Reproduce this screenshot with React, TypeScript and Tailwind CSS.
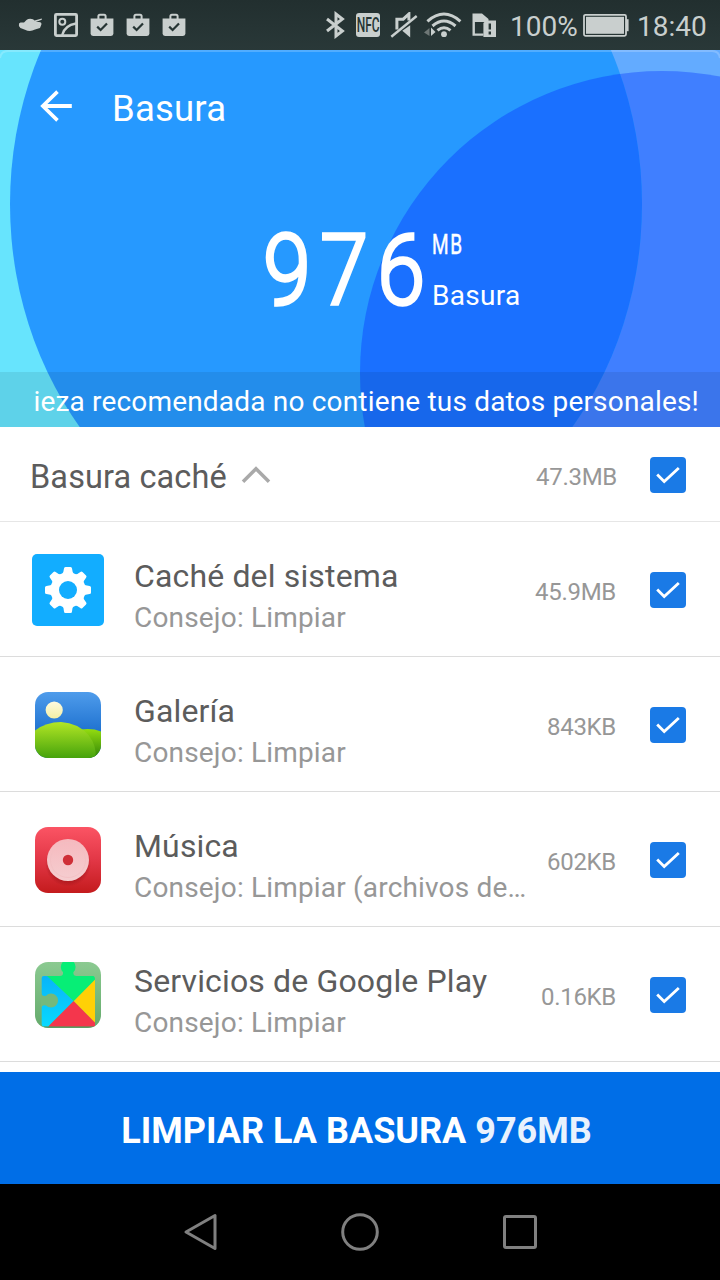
import type { ReactNode } from "react";

const ink = "#c9cfce";

function BagIcon() {
  return (
    <svg width="24" height="24" viewBox="0 0 24 24" className="shrink-0">
      <path d="M8.4 6V3.2Q8.4 1.7 9.9 1.7h4.2q1.5 0 1.5 1.5V6" fill="none" stroke={ink} strokeWidth="2" />
      <path d="M.6 5.4h22.8V20.6q0 2.4-2.4 2.4H3Q.6 23 .6 20.6z" fill={ink} />
      <path d="M7.2 13.6l3.4 3.4 6.4-6.6" fill="none" stroke="#263534" strokeWidth="2.2" />
    </svg>
  );
}

function StatusBar() {
  return (
    <div className="flex h-[50px] items-center bg-linear-to-b from-[#222f2f] to-[#293838] pl-[18px] text-[28px] leading-none text-[#c9cfce]">
      <div className="flex w-[306px] items-center gap-3">
        <svg width="24" height="24" viewBox="0 0 24 24" className="shrink-0">
          <path d="M1 10.5L2.5 9.5H6L8.5 7Q11 5 15 6.2L16.5 7.6L23.8 5.6V6.8L17.8 9H21Q23.9 9.4 23.4 11.4L22 15L17 16.6Q12 19.4 7 16.8L2.4 15Q.2 12.5 1 10.5z" fill={ink} />
        </svg>
        <svg width="24" height="24" viewBox="0 0 24 24" fill="none" stroke={ink} className="shrink-0">
          <rect x="1.4" y="1.4" width="21.2" height="21.2" rx="1" strokeWidth="2.8" />
          <circle cx="8.3" cy="8.7" r="3" strokeWidth="2" />
          <path d="M8.2 22Q10.5 12.5 22 10.5" strokeWidth="2.4" />
        </svg>
        <BagIcon />
        <BagIcon />
        <BagIcon />
      </div>
      <svg width="24" height="28" viewBox="0 0 24 28" className="shrink-0">
        <path d="M3 8L18.4 20L12 25V3L18.4 8L3 20" fill="none" stroke={ink} strokeWidth="3" />
      </svg>
      <div className="ml-2 flex h-6 w-6 shrink-0 items-center justify-center rounded-[3px] bg-[#c9cfce]">
        <span className="inline-block scale-x-[0.6] font-['Roboto',sans-serif] text-[20px] font-medium text-[#263534]">NFC</span>
      </div>
      <svg width="28" height="26" viewBox="0 0 28 26" className="ml-[10px] shrink-0">
        <path d="M1.3 24.7L26.7 4" fill="none" stroke={ink} strokeWidth="2.4" />
        <path d="M6.9 17.5V7.2H13.2L18.9 2V8.5" fill="none" stroke={ink} strokeWidth="3" />
        <path d="M20.2 13.2V25.6L12.3 18.8z" fill={ink} />
      </svg>
      <svg width="38" height="26" viewBox="0 0 38 26" className="ml-[6px] shrink-0">
        <g fill="none" stroke={ink} strokeWidth="3">
          <path d="M3.4 9.3Q20 -5.2 36.4 9.3" />
          <path d="M8.5 14Q20 4 31.5 14" />
          <path d="M13.5 18.4Q20 13 26.5 18.4" />
        </g>
        <circle cx="20" cy="22.2" r="2.9" fill={ink} />
        <path d="M0 20.5L5.5 16v8z" fill="#6e7776" />
        <path d="M7 15.5L11.5 20 7 24z" fill={ink} />
      </svg>
      <svg width="26" height="26" viewBox="0 0 26 26" className="ml-[9px] shrink-0">
        <path d="M1.5 1.4h9.5L17.5 7v3H3.9V21.4H12.5V23.8H1.5z" fill={ink} />
        <path d="M15 8.4h10V25H12.4V11z" fill={ink} />
        <path d="M18.8 11.4v6.2M18.8 19.6v2.8" stroke="#263534" strokeWidth="2.4" />
      </svg>
      <span className="ml-[13px] w-[70px] pt-[4px]">100%</span>
      <svg width="46" height="24" viewBox="0 0 46 24" className="ml-[3px] shrink-0">
        <rect x="1" y="1.8" width="42" height="21" rx="1.5" fill="none" stroke={ink} strokeWidth="1.8" />
        <rect x="3" y="3.8" width="38" height="17" fill={ink} />
        <path d="M43 6.2h2.6v12H43z" fill={ink} />
      </svg>
      <span className="ml-[8px] pt-[4px]">18:40</span>
    </div>
  );
}

function HeaderArt() {
  return (
    <svg width="720" height="377" viewBox="0 50 720 377" className="absolute inset-0">
      <defs>
        <clipPath id="disc">
          <ellipse cx="326" cy="204" rx="316" ry="356" />
        </clipPath>
      </defs>
      <rect y="50" width="360" height="377" fill="#67e4fd" />
      <rect x="360" y="50" width="360" height="377" fill="#63abff" />
      <circle cx="662" cy="373" r="302" fill="#407fff" />
      <ellipse cx="326" cy="204" rx="316" ry="356" fill="#2699ff" />
      <circle cx="662" cy="373" r="302" fill="#1a70ff" clipPath="url(#disc)" />
      <path d="M0 58Q1 51 8 51H712Q719 51 720 58" fill="none" stroke="#fff" strokeOpacity=".2" strokeWidth="2" />
    </svg>
  );
}

function Header() {
  return (
    <header className="relative h-[377px] overflow-hidden text-white">
      <HeaderArt />
      <div className="relative flex h-full flex-col">
        <div className="flex h-[116px] items-center pl-10">
          <svg width="32" height="32" viewBox="0 0 32 32" className="mb-[4px]" fill="none" stroke="#fff">
            <path d="M31.8 16H3" strokeWidth="4" />
            <path d="M17.5 1.6L2.8 16l14.7 14.4" strokeWidth="3.6" />
          </svg>
          <h1 className="ml-[40px] pt-[2px] text-[36.5px] leading-none tracking-[0.2px]">Basura</h1>
        </div>
        <div className="flex flex-1 pt-[61px] pl-[263px]">
          <div className="w-[169px]">
            <span className="mt-[2px] inline-block origin-left scale-x-[0.88] text-[98px] leading-[84px] font-light tracking-[10.6px] whitespace-nowrap [-webkit-text-stroke:3.5px_white] [stroke-linejoin:round]">
              97<span className="tracking-normal">6</span>
            </span>
          </div>
          <div className="flex flex-col">
            <span className="mt-[4px] inline-block origin-left scale-x-[0.68] text-[28px] leading-[28px] tracking-[2.5px] [-webkit-text-stroke:0.5px_white]">MB</span>
            <span className="mt-[23px] text-[28px] leading-[28px] tracking-[0.3px]">Basura</span>
          </div>
        </div>
        <div className="flex h-[55px] items-center justify-end bg-black/8 pt-[5px] pr-[21px] text-[28px] tracking-[0.18px] whitespace-nowrap">
          ieza recomendada no contiene tus datos personales!
        </div>
      </div>
    </header>
  );
}

function Check() {
  return (
    <span className="flex h-9 w-9 shrink-0 items-center justify-center rounded-[4px] bg-[#1a7ae6]">
      <svg width="24" height="18" viewBox="0 0 24 18" fill="none" stroke="#fff" strokeWidth="2.8">
        <path d="M1.2 8.6l7 7L22.8 2" />
      </svg>
    </span>
  );
}

function SystemIcon() {
  const teeth = [0, 45, 90, 135, 180, 225, 270, 315];
  return (
    <svg width="72" height="72" viewBox="0 0 72 72">
      <rect width="72" height="72" rx="5" fill="#12adff" />
      <g fill="#fff">
        {teeth.map((a) => (
          <path key={a} d="M29.5 21Q31.7 19 32 14.5Q32 13 33.5 13h5Q40 13 40 14.5Q40.3 19 42.5 21z" transform={`rotate(${a} 36 36)`} />
        ))}
        <circle cx="36" cy="36" r="17.5" />
      </g>
      <circle cx="36" cy="36" r="9" fill="#12adff" />
    </svg>
  );
}

function GalleryIcon() {
  return (
    <svg width="66" height="66" viewBox="0 0 66 66">
      <defs>
        <clipPath id="galleryShape"><rect width="66" height="66" rx="13" /></clipPath>
        <linearGradient id="sky" x2="0" y2="1"><stop stopColor="#4f9ceb" /><stop offset=".6" stopColor="#1f72d0" /></linearGradient>
        <linearGradient id="hill" x2="0" y2="1"><stop stopColor="#b2e625" /><stop offset="1" stopColor="#46a30c" /></linearGradient>
        <linearGradient id="hillBack" x2="0" y2="1"><stop stopColor="#94dc10" /><stop offset="1" stopColor="#2f8507" /></linearGradient>
        <linearGradient id="sun" x2="0" y2="1"><stop stopColor="#fffbe0" /><stop offset="1" stopColor="#f3efa4" /></linearGradient>
      </defs>
      <g clipPath="url(#galleryShape)">
        <rect width="66" height="66" fill="url(#sky)" />
        <circle cx="19.2" cy="18" r="8.6" fill="url(#sun)" />
        <path d="M44 38Q56 35.5 66 39.5V66H44z" fill="url(#hillBack)" />
        <path d="M0 38.5Q11 30 26 30Q43 31 53.5 43Q62 54 60.5 66H0z" fill="url(#hill)" />
      </g>
    </svg>
  );
}

function MusicIcon() {
  return (
    <svg width="66" height="66" viewBox="0 0 66 66">
      <defs>
        <linearGradient id="red" x2="0" y2="1"><stop stopColor="#fb5464" /><stop offset=".5" stopColor="#e23746" /><stop offset="1" stopColor="#c41b1d" /></linearGradient>
        <radialGradient id="shade"><stop offset=".7" stopColor="#8a0d12" stopOpacity=".55" /><stop offset="1" stopColor="#8a0d12" stopOpacity="0" /></radialGradient>
        <linearGradient id="record" x2="0" y2="1"><stop stopColor="#f6b9be" /><stop offset="1" stopColor="#f5ced0" /></linearGradient>
      </defs>
      <rect width="66" height="66" rx="13" fill="url(#red)" />
      <circle cx="33" cy="36.5" r="23" fill="url(#shade)" />
      <circle cx="33" cy="33" r="21" fill="url(#record)" />
      <circle cx="33" cy="33" r="17.5" fill="none" stroke="#f3bfc3" strokeWidth=".8" />
      <circle cx="33" cy="33" r="5.2" fill="#cf2f37" />
    </svg>
  );
}

function PlayServicesIcon() {
  return (
    <svg width="66" height="66" viewBox="0 0 66 66">
      <defs>
        <clipPath id="playShape"><rect width="66" height="66" rx="13" /></clipPath>
        <linearGradient id="sage" x2="0" y2="1"><stop stopColor="#8bca91" /><stop offset="1" stopColor="#64aa6b" /></linearGradient>
        <linearGradient id="cyan" x2="0" y2="1"><stop stopColor="#08b4f8" /><stop offset="1" stopColor="#08d9ff" /></linearGradient>
      </defs>
      <g clipPath="url(#playShape)">
        <rect width="66" height="66" fill="url(#sage)" />
        <path d="M6.7 62V16q0-2 2-2H13L38.7 39 13.3 64.5H8.7q-2 0-2-2.5z" fill="url(#cyan)" />
        <path d="M13.3 64.5L38.7 39 60 60.5v4z" fill="#f4364c" />
        <path d="M60 17.5V60.5L38.7 39z" fill="#ffd006" />
        <path d="M12 14H25Q28.5 14 28 10.2A7.4 7.4 0 1 1 38.4 10.2Q38 14 41.5 14H58q2 0 2 3.5L38.7 39z" fill="#07ee76" />
        <path d="M6 30Q6.5 34.8 11 33.8A7 7 0 1 1 11 43.4Q6.5 42.5 6 47z" fill="#74b97c" />
        <path d="M9 65H59" stroke="#3f7848" strokeOpacity=".5" />
      </g>
    </svg>
  );
}

type Item = { icon: ReactNode; name: string; tip: string; size: string };

const items: Item[] = [
  { icon: <SystemIcon />, name: "Caché del sistema", tip: "Consejo: Limpiar", size: "45.9MB" },
  { icon: <GalleryIcon />, name: "Galería", tip: "Consejo: Limpiar", size: "843KB" },
  { icon: <MusicIcon />, name: "Música", tip: "Consejo: Limpiar (archivos de…", size: "602KB" },
  { icon: <PlayServicesIcon />, name: "Servicios de Google Play", tip: "Consejo: Limpiar", size: "0.16KB" },
];

function Row({ icon, name, tip, size }: Item) {
  return (
    <li className="flex h-[135px] items-center border-b border-[#dcdcdc] pt-[2px] pr-[34px] pl-8">
      <div className="flex w-[72px] shrink-0 justify-center">{icon}</div>
      <div className="ml-[30px] w-[400px] shrink-0 pt-[14px] whitespace-nowrap">
        <div className="text-[32px] leading-[42px] tracking-[0.15px] text-[#5c5c5c]">{name}</div>
        <div className="text-[28px] leading-[42px] tracking-[0.18px] text-[#979797]">{tip}</div>
      </div>
      <span className="-ml-[21px] flex-1 pt-[3px] pr-[34px] text-right text-2xl tracking-[-0.3px] text-[#979797]">{size}</span>
      <Check />
    </li>
  );
}

export default function App() {
  return (
    <div className="flex h-[1280px] w-[720px] flex-col overflow-hidden bg-white font-['Roboto',sans-serif]">
      <StatusBar />
      <Header />
      <main className="h-[645px]">
        <div className="flex h-[95px] items-center border-b border-[#e6e6e6] pt-[2px] pr-[34px] pl-[30px]">
          <h2 className="pt-[5px] text-[32.5px] leading-none tracking-[0.1px] text-[#5c5c5c]">Basura caché</h2>
          <svg width="30" height="18" viewBox="0 0 30 18" className="ml-[14px]" fill="none" stroke="#a9a9a9" strokeWidth="3.5">
            <path d="M2 15.8L15 2.8l13 13" />
          </svg>
          <span className="flex-1 pt-[4px] pr-[33px] text-right text-2xl tracking-[-0.3px] text-[#979797]">47.3MB</span>
          <Check />
        </div>
        <ul>
          {items.map((item) => (
            <Row key={item.name} {...item} />
          ))}
        </ul>
      </main>
      <button className="flex h-[112px] items-center justify-center gap-[9px] bg-[#006ee7] pt-[6px] pr-[7px] text-[36px] font-bold text-white">
        <span>LIMPIAR LA BASURA</span>
        <span className="text-[#e9f2fd]">976MB</span>
      </button>
      <nav className="flex h-24 items-center justify-center gap-[122px] bg-black">
        <svg width="38" height="40" viewBox="0 0 38 40" fill="none" stroke="#808080" strokeWidth="3" strokeLinejoin="round">
          <path d="M34 3.5V36.5L5 20z" />
        </svg>
        <svg width="38" height="38" viewBox="0 0 38 38" fill="none" stroke="#808080" strokeWidth="3">
          <circle cx="19" cy="19" r="17.3" />
        </svg>
        <svg width="38" height="38" viewBox="0 0 38 38" fill="none" stroke="#808080" strokeWidth="3">
          <rect x="3.5" y="3.5" width="31" height="31" rx="1.5" />
        </svg>
      </nav>
    </div>
  );
}
